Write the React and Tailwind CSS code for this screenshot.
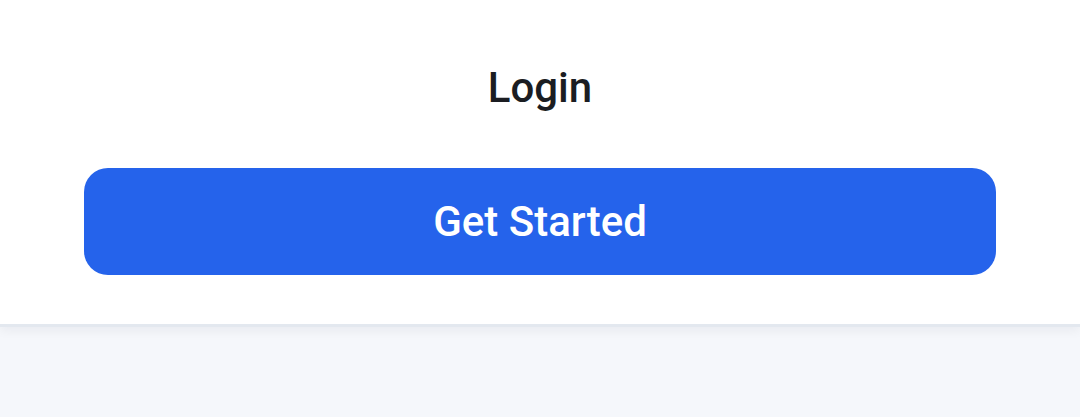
import React from 'react';

const App = () => {
  return (
    <div className="w-[1080px] h-[417px] bg-[#f5f7fb] overflow-hidden" style={{ fontFamily: 'Roboto, "Liberation Sans", sans-serif' }}>
      <div className="bg-white border-b-[3px] border-[#e3e8ef] shadow-[0_4px_10px_rgba(15,23,42,0.05)] px-[84px] pt-[62px] pb-[49px] flex flex-col items-center">
        <h1 className="text-[42px] leading-[52px] font-medium text-[#1b1d22]">Login</h1>
        <button className="mt-[54px] w-full h-[107px] rounded-[24px] bg-[#2563eb] text-white text-[42px] font-medium">
          Get Started
        </button>
      </div>
    </div>
  );
};

export default App;
